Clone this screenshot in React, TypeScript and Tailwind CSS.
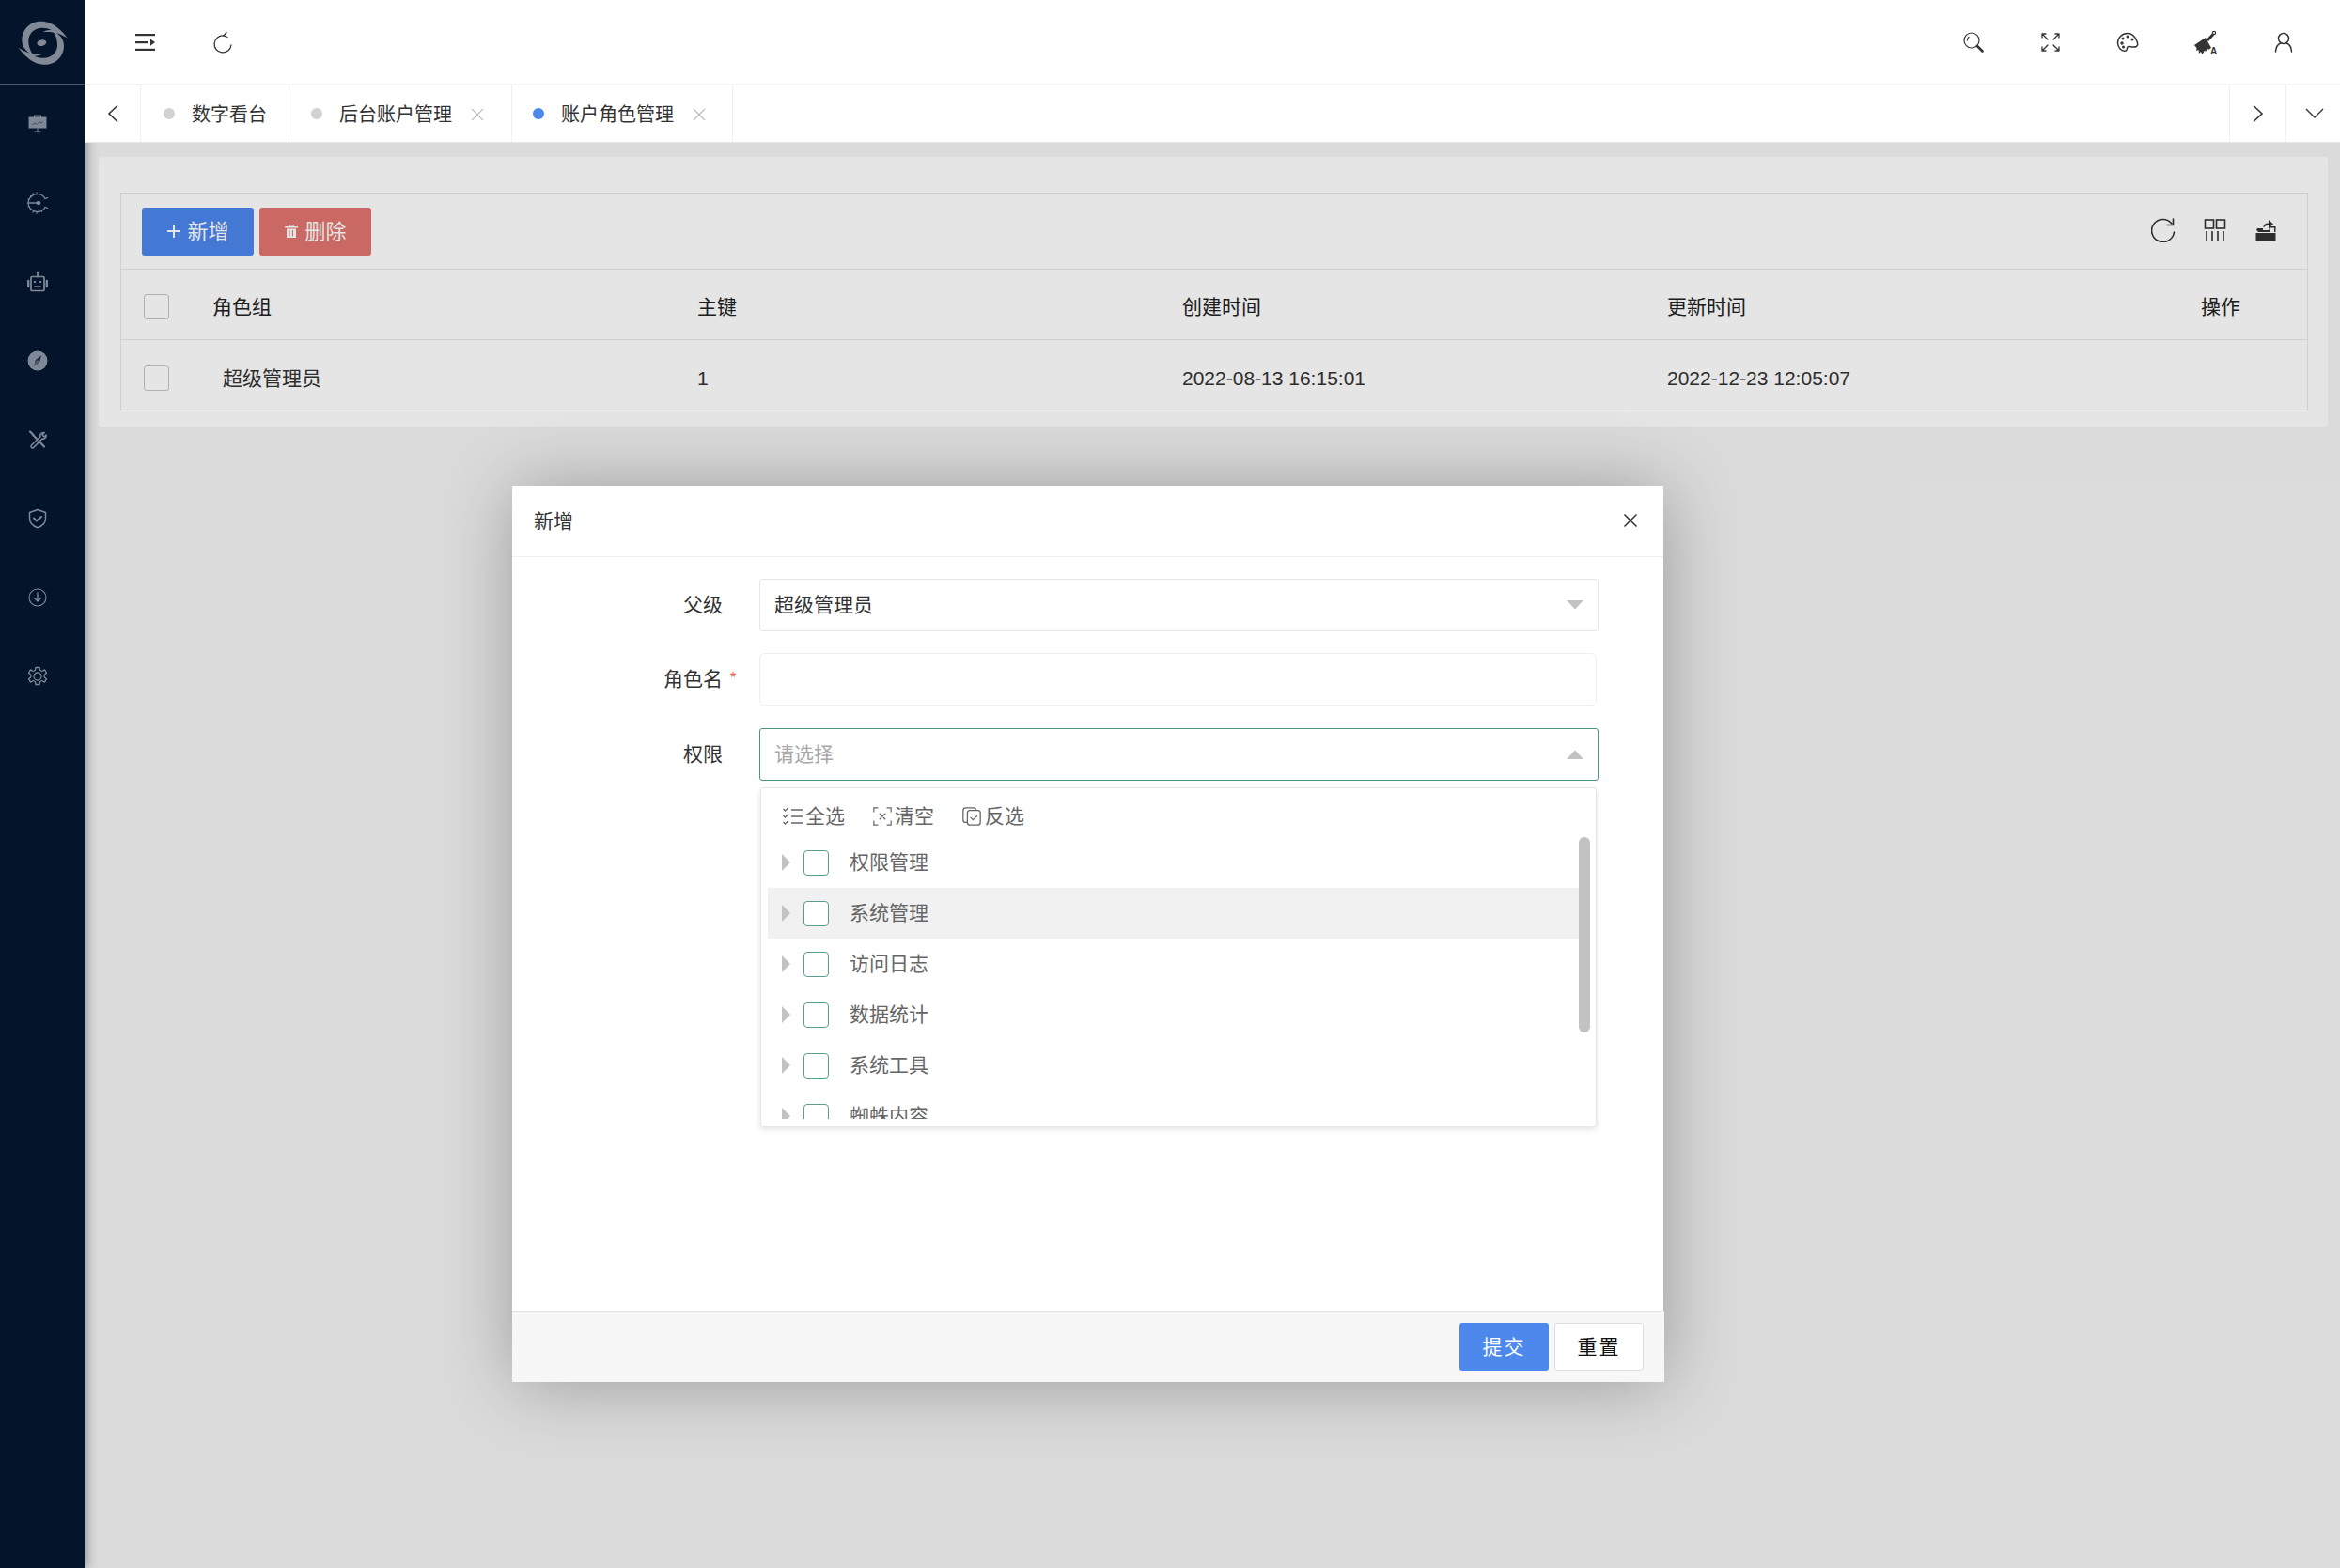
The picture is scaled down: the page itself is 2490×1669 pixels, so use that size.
import React from "react";

type P = { className?: string };
const S = ({ className, children, sw = 1.5 }: P & { children: React.ReactNode; sw?: number }) => (
  <svg viewBox="0 0 24 24" fill="none" stroke="currentColor" strokeWidth={sw} strokeLinecap="round" strokeLinejoin="round" className={className}>
    {children}
  </svg>
);

const ARM = "M185 92C175 78 168 70 158 62C140 45 120 38 100 38C62 38 40 68 40 98C40 118 52 135 75 145C66 130 60 115 61 98C62 76 80 59 105 59C116 59 124 61 134 65C124 65 115 67 106 73C130 69 160 74 185 92Z";

const Logo = () => (
  <svg viewBox="0 0 210 210" className="h-[70px] w-[70px] text-[#808995]" fill="currentColor">
    <path d={ARM} />
    <path transform="rotate(180 107 107)" d={ARM} />
    <ellipse cx="103" cy="107" rx="15" ry="10" transform="rotate(-10 103 107)" />
  </svg>
);

const SideIcons = [
  <svg key="1" viewBox="0 0 24 24" className="h-6 w-6">
    <rect x="2.5" y="4.5" width="19" height="12" fill="currentColor" />
    <rect x="8.5" y="3" width="7" height="2" fill="none" stroke="currentColor" />
    <path d="M6 13l3-2 2 1.5 3-3 2 1.5 2-1.5" stroke="#46505f" strokeWidth="1" fill="none" />
    <path d="M12 16.5V20M8.5 20h7" stroke="currentColor" strokeWidth="1" />
  </svg>,
  <S key="2" sw={1.3} className="h-6 w-6">
    <path d="M20 7.5A9.5 9.5 0 1 0 20 16.5" />
    <path d="M11 .8V2.6M4.5 4.5l1.2 1.2M1 12h1.6M4.5 19.5l1.2-1.2M11 21.5v1.7M7 1.8l.4 1M7 22.2l.4-1M2 8l1 .4M2 16l1-.4M16 20.5l.6 1" strokeWidth="1.1" />
    <path d="M3.5 12H12" strokeWidth="1.6" />
    <circle cx="13" cy="12" r="2.3" fill="currentColor" stroke="none" />
    <path d="M20 7.5l2.5-.8M20 16.5l2.5.8" />
  </S>,
  <S key="3" sw={1.7} className="h-6 w-6">
    <rect x="5" y="6.5" width="14" height="15" rx="1" />
    <path d="M12 6.5V2.5" />
    <circle cx="12" cy="2" r="1.2" fill="currentColor" stroke="none" />
    <path d="M2.2 11v6M21.8 11v6" strokeWidth="2.4" />
    <circle cx="9" cy="12" r="1.2" fill="currentColor" stroke="none" />
    <circle cx="15" cy="12" r="1.2" fill="currentColor" stroke="none" />
    <path d="M9 17h6" />
  </S>,
  <svg key="4" viewBox="0 0 24 24" className="h-6 w-6">
    <circle cx="12" cy="12" r="10.5" fill="currentColor" />
    <path d="M16 6.5l-2 7-6 4.5 2-7z" fill="#1a2940" />
    <path d="M12 11l2 2-.5.5-6 4.5 3-5.5z" fill="currentColor" opacity=".6" />
  </svg>,
  <S key="5" sw={1.5} className="h-6 w-6">
    <path d="M4 3.5l3.5 3.5M7 7l4 4M13.5 13.5l5.5 6" strokeWidth="2.2" />
    <path d="M18.5 4.5a3.4 3.4 0 0 0-3.6 4.4L5.5 18a1.6 1.6 0 1 0 2.4 2.4l9-9.4a3.4 3.4 0 0 0 4.2-4L19 9l-2-2 2.2-2.4z" />
  </S>,
  <S key="6" sw={1.5} className="h-6 w-6">
    <path d="M12 2.5l8.5 3v6.5c0 5-3.5 8-8.5 9.8C7 20 3.5 17 3.5 12V5.5z" />
    <path d="M8 11.5l3 3 5-4.5" strokeWidth="2" />
  </S>,
  <S key="7" sw={1.1} className="h-6 w-6">
    <circle cx="12" cy="12" r="9" />
    <path d="M12 7v9M8.5 12.5L12 16l3.5-3.5" strokeWidth="1.4" />
  </S>,
  <S key="8" sw={1.3} className="h-6 w-6">
    <path d="M10 2.5h4l.6 3 2.2 1 2.7-1.6 2 3.4-2.3 2v2.4l2.3 2-2 3.4-2.7-1.6-2.2 1-.6 3h-4l-.6-3-2.2-1-2.7 1.6-2-3.4 2.3-2v-2.4l-2.3-2 2-3.4 2.7 1.6 2.2-1z" />
    <circle cx="12" cy="12" r="4" />
  </S>,
];

const Tab = ({ label, active, close, cls }: { label: string; active?: boolean; close?: boolean; cls: string }) => (
  <div className={`flex h-full items-center border-r border-[#f0f0f0] ${cls}`}>
    <span className={`h-3 w-3 rounded-full ${active ? "bg-[#4d88ec]" : "bg-[#d2d2d2]"}`} />
    <span className="ml-[18px] pt-[2px] text-[20px] leading-none text-[#333]">{label}</span>
    {close && (
      <svg viewBox="0 0 16 16" className="ml-[19px] mt-[2px] h-4 w-4 text-[#bcbcbc]" fill="none" stroke="currentColor" strokeWidth="1.1">
        <path d="M2 2l12 12M14 2L2 14" />
      </svg>
    )}
  </div>
);

const Check = () => <span className="block h-[27px] w-[27px] rounded-[3px] border border-[#c4c4c4] bg-white" />;

const Field = ({ label, star, cls, children }: { label: string; star?: boolean; cls?: string; children: React.ReactNode }) => (
  <div className={`flex h-14 items-center ${cls ?? ""}`}>
    <div className="relative w-[224px] shrink-0 pr-0 text-right text-[21px] text-[#333]">
      {label}
      {star && <span className="absolute left-[232px] top-[3px] text-[16px] text-[#ff4d3d]">*</span>}
    </div>
    <div className="relative ml-[39px] h-full flex-1">{children}</div>
  </div>
);

const Caret = ({ up }: { up?: boolean }) => (
  <svg viewBox="0 0 18 10" className={`absolute right-[16px] top-[23px] h-[10px] w-[18px] text-[#c2c2c2] ${up ? "rotate-180" : ""}`} fill="currentColor">
    <path d="M0 0h18L9 9.5z" />
  </svg>
);

const trees = ["权限管理", "系统管理", "访问日志", "数据统计", "系统工具", "蜘蛛内容"];

export default function App() {
  return (
    <div className="flex h-[1669px] w-[2490px] overflow-hidden bg-white font-['Liberation_Sans','Noto_Sans_CJK_SC',sans-serif] text-[#333]">
      <aside className="relative z-10 w-[90px] shrink-0 bg-[#03142b] shadow-[3px_0_10px_rgba(0,21,41,0.35)]">
        <div className="flex h-[90px] items-center justify-center border-b border-[#4e5765]">
          <Logo />
        </div>
        <nav className="flex flex-col text-[#7f8896]">
          {SideIcons.map((ic, i) => (
            <div key={i} className="flex h-[84px] items-center pl-[28px]">
              {ic}
            </div>
          ))}
        </nav>
      </aside>

      <main className="flex min-w-0 flex-1 flex-col">
        <header className="relative z-20 flex h-[90px] shrink-0 items-center border-b border-[#f3f3f3] bg-white text-[#333]">
          <svg viewBox="0 0 22 18" className="ml-[54px] h-[18px] w-[22px]" fill="currentColor">
            <rect x="0" y="0" width="21" height="2.2" />
            <rect x="0" y="8" width="13" height="2.2" />
            <path d="M16 5.5l5 3.6-5 3.6z" />
            <rect x="0" y="15.8" width="21" height="2.2" />
          </svg>
          <svg viewBox="0 0 22 24" className="ml-[60px] h-6 w-[22px]" fill="none" stroke="currentColor" strokeWidth="1.3" strokeLinecap="round">
            <path d="M12 5a9 9 0 1 0 8 10" />
            <path d="M15 1.5L12 5l4 1.5" />
          </svg>
          <div className="ml-auto mr-[48px] flex items-center gap-[58px]">
            <S sw={1.2} className="h-6 w-6">
              <circle cx="10" cy="10" r="8" />
              <path d="M5.5 10a4.5 4.5 0 0 1 1.5-3.5" />
              <path d="M16 16l5.5 5.5" strokeWidth="2.6" />
            </S>
            <S sw={1.3} className="h-6 w-6">
              <path d="M3 3l6 6M3 3h4M3 3v4M21 3l-6 6M21 3h-4M21 3v4M3 21l6-6M3 21h4M3 21v-4M21 21l-6-6M21 21h-4M21 21v-4" />
            </S>
            <svg viewBox="0 0 24 24" className="h-6 w-6" fill="none" stroke="currentColor" strokeWidth="1.5">
              <path d="M12 2.5C6 2.5 1.5 7 1.5 12.5c0 5 4 9.5 8.5 8.5 2-.5 1-3 2-4 1.5-1.5 6 1 9.5-.5 1.5-1 1.5-3 .5-5.5C20 6 17 2.5 12 2.5z" />
              <circle cx="6" cy="13" r="1.7" fill="currentColor" stroke="none" />
              <circle cx="7" cy="8" r="1.5" fill="currentColor" stroke="none" />
              <circle cx="12" cy="6" r="1.5" fill="currentColor" stroke="none" />
              <circle cx="17" cy="9" r="1.5" fill="currentColor" stroke="none" />
              <circle cx="7.5" cy="17" r="1.5" fill="currentColor" stroke="none" />
            </svg>
            <svg viewBox="0 0 26 26" className="h-[26px] w-[26px] overflow-visible" fill="currentColor">
              <path d="M1 16L13 8L19 19L16 21L15 19.5L13 23L12 21.5L9.5 26L8 23L6 25L5.5 21L3 22L3.5 19Z" />
              <path d="M15 11L21 4.5" stroke="currentColor" strokeWidth="3" />
              <circle cx="22" cy="3" r="1.6" fill="none" stroke="currentColor" strokeWidth="1.2" />
              <text x="18" y="26" fontSize="10" fontWeight="700" fontFamily="Liberation Sans">A</text>
            </svg>
            <S sw={1.5} className="h-6 w-6">
              <circle cx="12" cy="8" r="5.5" />
              <path d="M3.5 22c.3-5 2.5-8 5.5-9M20.5 22c-.3-5-2.5-8-5.5-9" />
            </S>
          </div>
        </header>

        <div className="relative z-20 flex h-[62px] shrink-0 items-stretch border-b border-[#e8e8e8] bg-white">
          <div className="flex h-full w-[60px] items-center justify-center border-r border-[#f0f0f0]">
            <svg viewBox="0 0 14 20" className="h-5 w-[14px]" fill="none" stroke="currentColor" strokeWidth="1.6"><path d="M12 1.5L3 10l9 8.5" /></svg>
          </div>
          <Tab label="数字看台" cls="w-[158px] pl-[24px]" />
          <Tab label="后台账户管理" close cls="w-[237px] pl-[23px]" />
          <Tab label="账户角色管理" close active cls="w-[235px] pl-[22px]" />
          <div className="ml-auto flex h-full w-[60px] items-center justify-center border-l border-[#f0f0f0]">
            <svg viewBox="0 0 14 20" className="h-5 w-[14px]" fill="none" stroke="currentColor" strokeWidth="1.6"><path d="M2 1.5L11 10l-9 8.5" /></svg>
          </div>
          <div className="flex h-full w-[58px] items-center justify-center border-l border-[#f0f0f0] pl-[2px]">
            <svg viewBox="0 0 20 14" className="h-[14px] w-5" fill="none" stroke="currentColor" strokeWidth="1.4"><path d="M1 2l9 9 9-9" /></svg>
          </div>
        </div>

        <div className="relative flex-1 bg-[#f4f4f4] pb-0 pl-[15px] pr-[13px] pt-[15px]">
          <section className="rounded-[3px] bg-white pb-[16px] pl-[23px] pr-[21px] pt-[38px]">
            <div className="border border-[#e8e8e8]">
              <div className="flex h-[81px] items-center justify-between border-b border-[#e8e8e8] pl-[22px] pr-[32px]">
                <div className="flex gap-[6px]">
                  <button className="flex h-[51px] w-[119px] items-center justify-center gap-[6px] rounded-[3px] bg-[#4b87ec] text-[22px] text-white">
                    <svg viewBox="0 0 16 16" className="h-4 w-4" fill="none" stroke="currentColor" strokeWidth="2"><path d="M8 1v14M1 8h14" /></svg>
                    新增
                  </button>
                  <button className="flex h-[51px] w-[119px] items-center justify-center gap-[6px] rounded-[3px] bg-[#e06e69] text-[22px] text-white opacity-95">
                    <svg viewBox="0 0 16 16" className="h-4 w-4" fill="currentColor"><path d="M1 3h14v1.5H1zM5 1h6v1.5H5zM3 5.5h10V15H3zM5.5 7v6.5h1V7zm3.5 0v6.5h1V7z" fillRule="evenodd" /></svg>
                    删除
                  </button>
                </div>
                <div className="mb-[2px] flex items-center text-[#333]">
                  <svg viewBox="0 0 26 26" className="h-[26px] w-[26px]" fill="none" stroke="currentColor" strokeWidth="1.6" strokeLinecap="round">
                    <path d="M22 6A12 12 0 1 0 24.5 15" />
                    <path d="M23.5 1v6.5H17" />
                  </svg>
                  <svg viewBox="0 0 24 24" className="ml-[30px] h-6 w-6" fill="none" stroke="currentColor" strokeWidth="1.6">
                    <rect x="1.5" y="1" width="9" height="9" />
                    <rect x="13.5" y="1" width="9" height="9" />
                    <path d="M3 13v10M9 13v10M15 13v10M21 13v10" />
                  </svg>
                  <svg viewBox="0 0 24 24" className="ml-[30px] h-6 w-6" fill="currentColor">
                    <path d="M1.5 15h21v8.5h-21zM2 12l1-2h6v2h6.5v-4H22.5V14H21v-4.5h-4V14H3.5V13zM9.5 9.5c0-3.5 2-5 5.5-5V1l5 4.5-5 4.5V7c-2.5 0-4 .5-5.5 2.5z" />
                  </svg>
                </div>
              </div>
              <div className="grid h-[75px] grid-cols-[78px_516px_516px_516px_516px_1fr] items-center border-b border-[#e8e8e8] text-[21px] text-[#222]">
                <div className="pl-[24px] pt-[4px]"><Check /></div>
                <div className="pl-[19px] pt-[5px]">角色组</div>
                <div className="pl-[19px] pt-[5px]">主键</div>
                <div className="pl-[19px] pt-[5px]">创建时间</div>
                <div className="pl-[19px] pt-[5px]">更新时间</div>
                <div className="pt-[5px] text-center">操作</div>
              </div>
              <div className="grid h-[75px] grid-cols-[78px_516px_516px_516px_516px_1fr] items-center text-[21px] text-[#333]">
                <div className="pl-[24px] pt-[6px]"><Check /></div>
                <div className="pl-[30px] pt-[6px]">超级管理员</div>
                <div className="pl-[19px] pt-[6px]">1</div>
                <div className="pl-[19px] pt-[6px]">2022-08-13 16:15:01</div>
                <div className="pl-[19px] pt-[6px]">2022-12-23 12:05:07</div>
                <div />
              </div>
            </div>
          </section>

          <div className="absolute inset-0 bg-black/10" />

          <div className="absolute left-[455px] top-[365px] z-20 flex h-[954px] w-[1225px] flex-col bg-white shadow-[1.5px_1.5px_75px_rgba(0,0,0,0.3)]">
            <div className="relative flex h-[76px] shrink-0 items-center border-b border-[#f0f0f0] pl-[23px] text-[21px] text-[#333]">
              新增
              <svg viewBox="0 0 16 16" className="absolute right-[27px] top-[29px] h-4 w-4" fill="none" stroke="#333" strokeWidth="1.5"><path d="M1.5 1.5l13 13M14.5 1.5l-13 13" /></svg>
            </div>
            <div className="flex flex-1 flex-col gap-[23px] pr-[69px] pt-[23px]">
              <Field label="父级">
                <div className="flex h-full items-center rounded-[3px] border border-[#e6e6e6] pl-[15px] text-[21px] text-[#333]">超级管理员</div>
                <Caret />
              </Field>
              <Field label="角色名" star>
                <div className="mr-[2px] h-full rounded-[6px] border border-[#eeeeee]" />
              </Field>
              <Field label="权限" cls="mt-px">
                <div className="flex h-full items-center rounded-[3px] border border-[#4b9485] pl-[15px] text-[21px] text-[#a8a8a8]">请选择</div>
                <Caret up />
                <div className="absolute left-[1px] top-[63px] z-10 h-[361px] w-[890px] rounded-[3px] border border-[#e6e6e6] bg-white shadow-[0_3px_6px_rgba(0,0,0,0.12)]">
                  <div className="flex h-[52px] items-center gap-[29px] pl-[22px] pt-[7px] text-[21px] text-[#666]">
                    <span className="flex items-center gap-px">
                      <svg viewBox="0 0 24 24" className="h-6 w-6" fill="none" stroke="currentColor" strokeWidth="1.3">
                        <path d="M10 5h12M10 12h12M10 19h12" strokeWidth="1.6" />
                        <path d="M1.5 4l2 2 3.5-3.5M1.5 11l2 2 3.5-3.5M1.5 18l2 2 3.5-3.5" />
                      </svg>
                      全选
                    </span>
                    <span className="flex items-center gap-[2px]">
                      <svg viewBox="0 0 24 24" className="h-[22px] w-[22px]" fill="none" stroke="currentColor" strokeWidth="1.3">
                        <path d="M2 7V2h5M17 2h5v5M22 17v5h-5M7 22H2v-5M8.5 8.5l7 7M15.5 8.5l-7 7" />
                      </svg>
                      清空
                    </span>
                    <span className="flex items-center gap-[3px]">
                      <svg viewBox="0 0 24 24" className="h-[22px] w-[22px]" fill="none" stroke="currentColor" strokeWidth="1.4">
                        <rect x="7" y="5" width="15" height="17" rx="3" />
                        <path d="M7 19H5a3 3 0 0 1-3-3V5a3 3 0 0 1 3-3h9a3 3 0 0 1 3 3M10.5 13l3 3 5-5" />
                      </svg>
                      反选
                    </span>
                  </div>
                  <div className="h-[300px] overflow-hidden">
                    {trees.map((t, i) => (
                      <div key={t} className={`ml-[7px] flex h-[54px] w-[863px] items-center pl-[15px] text-[21px] text-[#666] ${i === 1 ? "bg-[#f1f1f1]" : ""}`}>
                        <svg viewBox="0 0 9 18" className="h-[18px] w-[9px] text-[#c2c2c2]" fill="currentColor"><path d="M0 0l9 9-9 9z" /></svg>
                        <span className="ml-[14px] h-[27px] w-[27px] rounded-[4px] border border-[#5a9e92] bg-white" />
                        <span className="ml-[22px]">{t}</span>
                      </div>
                    ))}
                  </div>
                  <div className="absolute left-[870px] top-[52px] h-[208px] w-3 rounded-[6px] bg-[#c2c2c2]" />
                </div>
              </Field>
            </div>
            <div className="mr-[-1px] flex h-[76px] shrink-0 items-center justify-end gap-[6px] border-t border-[#e8e8ec] bg-[#f7f7f8] pr-[22px]">
              <button className="h-[51px] w-[95px] rounded-[3px] bg-[#4d88ec] text-[21px] tracking-[2px] text-white">提交</button>
              <button className="h-[51px] w-[95px] rounded-[3px] border border-[#dcdce4] bg-white text-[21px] tracking-[2px] text-[#111]">重置</button>
            </div>
          </div>
        </div>
      </main>
    </div>
  );
}
